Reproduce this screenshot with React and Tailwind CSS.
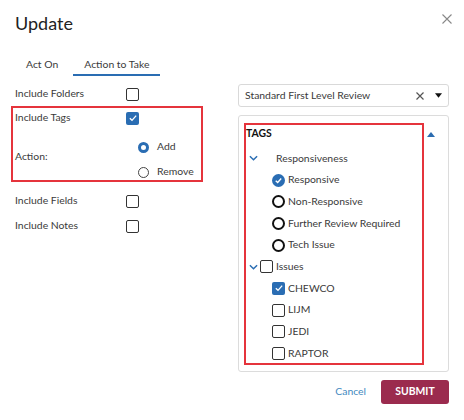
import React from 'react';

const BLUE = '#2b6cb0';

const Box = ({ checked }) => (
  <span
    className={
      checked
        ? 'flex h-[13px] w-[13px] items-center justify-center rounded-[2px] bg-[#2a6db3]'
        : 'flex h-[13px] w-[13px] items-center justify-center rounded-[2px] border-[1.5px] border-[#333] bg-white'
    }
  >
    {checked && (
      <svg viewBox="0 0 12 12" className="h-[10px] w-[10px]">
        <path d="M2.2 6.3 L4.8 8.8 L9.8 3.2" fill="none" stroke="#fff" strokeWidth="1.6" />
      </svg>
    )}
  </span>
);

const Circle = ({ checked }) =>
  checked ? (
    <span className="flex h-[13px] w-[13px] items-center justify-center rounded-full bg-[#2a6db3]">
      <svg viewBox="0 0 12 12" className="h-[9px] w-[9px]">
        <path d="M2.3 6.2 L4.9 8.6 L9.6 3.4" fill="none" stroke="#fff" strokeWidth="1.8" />
      </svg>
    </span>
  ) : (
    <span className="h-[13px] w-[13px] rounded-full border-2 border-[#111] bg-white" />
  );

const Chevron = () => (
  <svg viewBox="0 0 10 6" className="h-[6px] w-[9px]">
    <path d="M1 1 L5 5 L9 1" fill="none" stroke="#2a6db3" strokeWidth="1.6" />
  </svg>
);

const Row = ({ label, checked }) => (
  <div className="flex h-[24px] items-center pl-[4px]">
    <span className="w-[111px]">{label}</span>
    <Box checked={checked} />
  </div>
);

const Radio = ({ label, on }) => (
  <div className="flex h-[16px] items-center">
    <span
      className={
        on
          ? 'h-[11px] w-[11px] rounded-full border-[3px] border-[#2a6db3] bg-white'
          : 'h-[11px] w-[11px] rounded-full border border-[#444] bg-white'
      }
    />
    <span className="ml-[8px]">{label}</span>
  </div>
);

const RESPONSES = [
  { label: 'Responsive', checked: true },
  { label: 'Non-Responsive' },
  { label: 'Further Review Required' },
  { label: 'Tech Issue' },
];

const ISSUES = [
  { label: 'CHEWCO', checked: true },
  { label: 'LIJM' },
  { label: 'JEDI' },
  { label: 'RAPTOR' },
];

export default function App() {
  return (
    <div className="h-[420px] w-[464px] bg-white font-['Lato',sans-serif] text-[10.4px] text-[#3a3a3a]">
      <div className="flex items-start justify-between pl-[15px] pr-[12px] pt-[11px]">
        <h1 className="text-[18px] leading-[24px] text-[#222]">Update</h1>
        <svg viewBox="0 0 10 10" className="mt-[3px] h-[10px] w-[10px]">
          <path d="M0.5 0.5 L9.5 9.5 M9.5 0.5 L0.5 9.5" stroke="#888" strokeWidth="1.1" />
        </svg>
      </div>

      <div className="ml-[15px] mt-[22px] flex">
        <span className="px-[11px] pb-[3px] leading-[14px]">Act On</span>
        <span className="ml-[4px] border-b-2 border-[#2a6db3] px-[11px] pb-[3px] leading-[14px]">
          Action to Take
        </span>
      </div>

      <div className="mt-[5px] flex">
        <div className="ml-[11px] w-[192px] pt-[1px]">
          <Row label="Include Folders" />
          <div className="border-2 border-[#e5343c] pl-[2px]">
            <div className="flex h-[20px] items-center">
              <span className="w-[111px]">Include Tags</span>
              <Box checked />
            </div>
            <div className="mt-[11px] flex items-center">
              <span className="mb-[6px] w-[123px]">Action:</span>
              <div className="flex flex-col gap-[9px]">
                <Radio label="Add" on />
                <Radio label="Remove" />
              </div>
            </div>
          </div>
          <div className="mt-[7px]">
            <Row label="Include Fields" />
            <div className="mt-[1px]">
              <Row label="Include Notes" />
            </div>
          </div>
        </div>

        <div className="ml-[35px] mt-[3px] w-[211px]">
          <div className="flex h-[23px] items-center rounded-[3px] border border-[#d9d9d9] pl-[6px] pr-[6px]">
            <span className="flex-1">Standard First Level Review</span>
            <svg viewBox="0 0 8 8" className="mr-[11px] h-[8px] w-[8px]">
              <path d="M0.5 0.5 L7.5 7.5 M7.5 0.5 L0.5 7.5" stroke="#555" strokeWidth="1.2" />
            </svg>
            <svg viewBox="0 0 8 5" className="h-[5px] w-[7px]">
              <path d="M0 0 L8 0 L4 5 Z" fill="#111" />
            </svg>
          </div>

          <div className="mt-[8px] flex h-[257px] rounded-[3px] border border-[#dcdcdc] pl-[5px] pt-[7px]">
            <div className="h-[242px] w-[180px] border-2 border-[#e5343c]">
              <div className="flex h-[17px] items-end font-bold text-[#111]">TAGS</div>
              <div className="mt-[5.5px]">
                <div className="flex h-[21.7px] items-center pl-[3px]">
                  <Chevron />
                  <span className="ml-[18px]">Responsiveness</span>
                </div>
                {RESPONSES.map((r) => (
                  <div key={r.label} className="flex h-[21.7px] items-center gap-[3px] pl-[26px]">
                    <Circle checked={r.checked} />
                    <span>{r.label}</span>
                  </div>
                ))}
                <div className="flex h-[21.7px] items-center pl-[3px]">
                  <Chevron />
                  <span className="ml-[2px]">
                    <Box />
                  </span>
                  <span className="ml-[3px]">Issues</span>
                </div>
                {ISSUES.map((r) => (
                  <div key={r.label} className="flex h-[21.7px] items-center gap-[3px] pl-[26px]">
                    <Box checked={r.checked} />
                    <span>{r.label}</span>
                  </div>
                ))}
              </div>
            </div>
            <svg viewBox="0 0 8 5" className="ml-[3px] mt-[9px] h-[5px] w-[8px]">
              <path d="M0 5 L8 5 L4 0 Z" fill={BLUE} />
            </svg>
          </div>

          <div className="mt-[8px] flex items-center justify-end">
            <span className="mr-[15px] text-[#3f8ac0]">Cancel</span>
            <button className="h-[24px] w-[68px] rounded-[3px] bg-[#9b2b4e] font-bold text-white">
              SUBMIT
            </button>
          </div>
        </div>
      </div>
    </div>
  );
}
